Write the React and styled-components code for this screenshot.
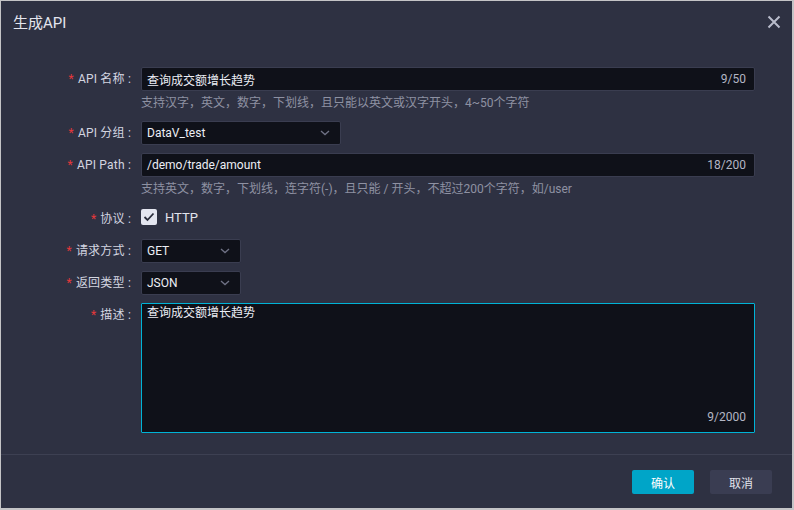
import React from "react";
import styled, { createGlobalStyle } from "styled-components";

const Global = createGlobalStyle`
  html, body { margin: 0; padding: 0; background: #c4c4c6; }
  body { font-family: Roboto, "Noto Sans CJK SC", sans-serif; font-size: 12px; }
  * { box-sizing: border-box; }
`;

const Dialog = styled.div`
  margin: 1px 0 0 1px;
  width: 791px;
  height: 507px;
  background: #2e3142;
  display: flex;
  flex-direction: column;
`;

const Header = styled.div`
  height: 44px;
  display: flex;
  align-items: center;
  justify-content: space-between;
  padding: 0 10px 4px 12px;
`;

const Title = styled.div`
  font-size: 15px;
  color: #e4e5ee;
`;

const Close = styled.div`
  width: 16px;
  height: 16px;
  display: flex;
  align-items: center;
  justify-content: center;
  margin-top: 2px;
`;

const Body = styled.div`
  flex: 1;
  padding: 22px 37px 20px 39px;
  display: flex;
  flex-direction: column;
`;

const Item = styled.div`
  display: flex;
  align-items: flex-start;
  margin-bottom: ${(p) => (p.$last ? 0 : p.$help ? 6 : 8)}px;
`;

const Label = styled.div`
  width: 91px;
  flex: none;
  height: 24px;
  line-height: 24px;
  text-align: right;
  color: #d3d5e0;
  margin-right: 10px;
  white-space: nowrap;
  letter-spacing: 0.2px;
`;

const Star = styled.span`
  color: #e5383b;
  margin-right: 4px;
`;

const Control = styled.div`
  flex: 1;
  display: flex;
  flex-direction: column;
`;

const InputBox = styled.div`
  height: 24px;
  width: ${(p) => p.$w || "100%"};
  background: #0f1119;
  border: 1px solid #3a3d50;
  border-radius: 2px;
  display: flex;
  align-items: center;
  padding: 0 8px 0 5px;
  color: #eceef5;
`;

const Value = styled.span`
  flex: 1;
  white-space: nowrap;
`;

const Count = styled.span`
  color: #b3b6c4;
`;

const Help = styled.div`
  line-height: 24px;
  color: #8e91a2;
`;

const Chevron = () => (
  <svg width="10" height="6" viewBox="0 0 10 6" style={{ marginRight: 2 }}>
    <path d="M1 1 L5 4.6 L9 1" stroke="#6f7285" strokeWidth="1.3" fill="none" />
  </svg>
);

const CheckRow = styled.div`
  height: 24px;
  display: flex;
  align-items: center;
  gap: 8px;
  color: #e2e4ec;
  font-size: 13px;
`;

const CheckBox = styled.div`
  width: 16px;
  height: 16px;
  border-radius: 2px;
  background: #e4e6f0;
  display: flex;
  align-items: center;
  justify-content: center;
  margin-top: -4px;
`;

const TextArea = styled.div`
  height: 130px;
  background: #0f1119;
  border: 1px solid #00b3d6;
  border-radius: 1px;
  padding: 0 5px 6px 5px;
  color: #eceef5;
  display: flex;
  flex-direction: column;
  justify-content: space-between;
  line-height: 18px;
`;

const AreaCount = styled.div`
  text-align: right;
  color: #b3b6c4;
  padding-right: 3px;
`;

const Footer = styled.div`
  height: 54px;
  border-top: 1px solid #3d4052;
  display: flex;
  justify-content: flex-end;
  align-items: flex-start;
  gap: 16px;
  padding: 15px 20px 0 0;
`;

const Button = styled.button`
  width: 62px;
  height: 24px;
  border: none;
  border-radius: 2px;
  font-family: inherit;
  font-size: 12px;
  background: ${(p) => (p.$primary ? "#00a5c8" : "#3a3d52")};
  color: ${(p) => (p.$primary ? "#ffffff" : "#e0e2ea")};
  padding: 0;
`;

const Req = ({ children }) => (
  <Label>
    <Star>*</Star>
    {children}
  </Label>
);

export default function App() {
  return (
    <>
      <Global />
      <Dialog>
        <Header>
          <Title>生成API</Title>
          <Close>
            <svg width="14" height="14" viewBox="0 0 14 14">
              <path d="M1.5 1.5 L12.5 12.5 M12.5 1.5 L1.5 12.5" stroke="#b9bccb" strokeWidth="2" />
            </svg>
          </Close>
        </Header>
        <Body>
          <Item $help>
            <Req>API 名称 :</Req>
            <Control>
              <InputBox>
                <Value>查询成交额增长趋势</Value>
                <Count>9/50</Count>
              </InputBox>
              <Help>支持汉字，英文，数字，下划线，且只能以英文或汉字开头，4~50个字符</Help>
            </Control>
          </Item>
          <Item>
            <Req>API 分组 :</Req>
            <Control>
              <InputBox $w="200px">
                <Value>DataV_test</Value>
                <Chevron />
              </InputBox>
            </Control>
          </Item>
          <Item $help>
            <Req>API Path :</Req>
            <Control>
              <InputBox>
                <Value>/demo/trade/amount</Value>
                <Count>18/200</Count>
              </InputBox>
              <Help>支持英文，数字，下划线，连字符(-)，且只能 / 开头，不超过200个字符，如/user</Help>
            </Control>
          </Item>
          <Item>
            <Req>协议 :</Req>
            <Control>
              <CheckRow>
                <CheckBox>
                  <svg width="12" height="10" viewBox="0 0 12 10">
                    <path d="M1.5 5 L4.5 8 L10.5 1.5" stroke="#2a2d3c" strokeWidth="1.8" fill="none" />
                  </svg>
                </CheckBox>
                <span style={{ marginTop: -4 }}>HTTP</span>
              </CheckRow>
            </Control>
          </Item>
          <Item>
            <Req>请求方式 :</Req>
            <Control>
              <InputBox $w="100px">
                <Value>GET</Value>
                <Chevron />
              </InputBox>
            </Control>
          </Item>
          <Item>
            <Req>返回类型 :</Req>
            <Control>
              <InputBox $w="100px">
                <Value>JSON</Value>
                <Chevron />
              </InputBox>
            </Control>
          </Item>
          <Item $last>
            <Req>描述 :</Req>
            <Control>
              <TextArea>
                <div>查询成交额增长趋势</div>
                <AreaCount>9/2000</AreaCount>
              </TextArea>
            </Control>
          </Item>
        </Body>
        <Footer>
          <Button $primary>确认</Button>
          <Button>取消</Button>
        </Footer>
      </Dialog>
    </>
  );
}
